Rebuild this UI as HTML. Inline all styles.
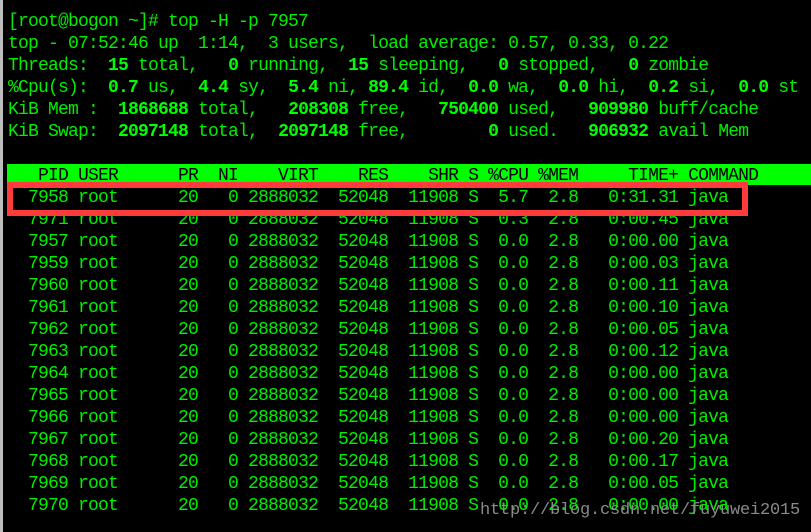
<!DOCTYPE html>
<html><head><meta charset="utf-8"><style>
html,body{margin:0;padding:0;background:#000;width:811px;height:532px;overflow:hidden;position:relative}
.l{position:absolute;left:0;top:0;width:3px;height:532px;background:#bdbdbd}
pre{position:absolute;left:8px;top:11px;margin:0;font-family:"Liberation Mono",monospace;font-size:18px;letter-spacing:-0.8px;line-height:22px;color:#00ee00}
b{font-weight:bold;color:#00ff00}
.h{position:absolute;left:7px;top:164px;width:804px;height:21px;background:#00ff00}
.hd{color:#000}
.box{position:absolute;left:7px;top:182px;width:729px;height:22px;border:6px solid #ff3b3b}
.wm{position:absolute;left:480px;top:501px;font-family:"Liberation Mono",monospace;font-size:17px;letter-spacing:-0.2px;color:#8a8a8a}
</style></head><body>
<div class="l"></div>
<div class="h"></div>
<pre>[root@bogon ~]# top -H -p 7957
top - 07:52:46 up  1:14,  3 users,  load average: 0.57, 0.33, 0.22
Threads:  <b>15</b> total,   <b>0</b> running,  <b>15</b> sleeping,   <b>0</b> stopped,   <b>0</b> zombie
%Cpu(s):  <b>0.7</b> us,  <b>4.4</b> sy,  <b>5.4</b> ni, <b>89.4</b> id,  <b>0.0</b> wa,  <b>0.0</b> hi,  <b>0.2</b> si,  <b>0.0</b> st
KiB Mem :  <b>1868688</b> total,   <b>208308</b> free,   <b>750400</b> used,   <b>909980</b> buff/cache
KiB Swap:  <b>2097148</b> total,  <b>2097148</b> free,        <b>0</b> used.   <b>906932</b> avail Mem

<span class="hd">   PID USER      PR  NI    VIRT    RES    SHR S %CPU %MEM     TIME+ COMMAND</span>
  7958 root      20   0 2888032  52048  11908 S  5.7  2.8   0:31.31 java
  7971 root      20   0 2888032  52048  11908 S  0.3  2.8   0:00.45 java
  7957 root      20   0 2888032  52048  11908 S  0.0  2.8   0:00.00 java
  7959 root      20   0 2888032  52048  11908 S  0.0  2.8   0:00.03 java
  7960 root      20   0 2888032  52048  11908 S  0.0  2.8   0:00.11 java
  7961 root      20   0 2888032  52048  11908 S  0.0  2.8   0:00.10 java
  7962 root      20   0 2888032  52048  11908 S  0.0  2.8   0:00.05 java
  7963 root      20   0 2888032  52048  11908 S  0.0  2.8   0:00.12 java
  7964 root      20   0 2888032  52048  11908 S  0.0  2.8   0:00.00 java
  7965 root      20   0 2888032  52048  11908 S  0.0  2.8   0:00.00 java
  7966 root      20   0 2888032  52048  11908 S  0.0  2.8   0:00.00 java
  7967 root      20   0 2888032  52048  11908 S  0.0  2.8   0:00.20 java
  7968 root      20   0 2888032  52048  11908 S  0.0  2.8   0:00.17 java
  7969 root      20   0 2888032  52048  11908 S  0.0  2.8   0:00.05 java
  7970 root      20   0 2888032  52048  11908 S  0.0  2.8   0:00.00 java</pre>
<div class="box"></div>
<div class="wm">http://blog.csdn.net/fuyuwei2015</div>
</body></html>
